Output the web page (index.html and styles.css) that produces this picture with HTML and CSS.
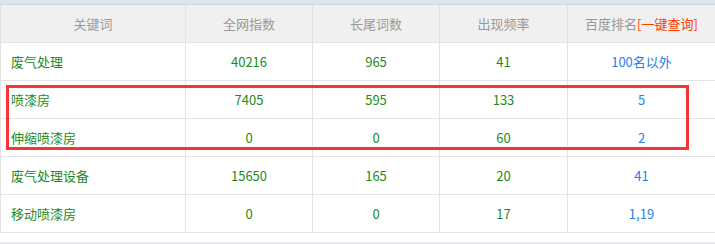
FILE: index.html
```html
<!DOCTYPE html>
<html lang="zh-CN">
<head>
<meta charset="utf-8">
<link rel="stylesheet" href="styles.css">
</head>
<body>
<div class="page">
  <div class="topbar"></div>
  <div class="grid">
    <div class="cell head">关键词</div>
    <div class="cell head">全网指数</div>
    <div class="cell head">长尾词数</div>
    <div class="cell head">出现频率</div>
    <div class="cell head">百度排名<a class="query">[一键查询]</a></div>

    <div class="cell kw">废气处理</div>
    <div class="cell num">40216</div>
    <div class="cell num">965</div>
    <div class="cell num">41</div>
    <div class="cell rank">100名以外</div>

    <div class="cell kw">喷漆房</div>
    <div class="cell num">7405</div>
    <div class="cell num">595</div>
    <div class="cell num">133</div>
    <div class="cell rank">5</div>

    <div class="cell kw">伸缩喷漆房</div>
    <div class="cell num">0</div>
    <div class="cell num">0</div>
    <div class="cell num">60</div>
    <div class="cell rank">2</div>

    <div class="cell kw">废气处理设备</div>
    <div class="cell num">15650</div>
    <div class="cell num">165</div>
    <div class="cell num">20</div>
    <div class="cell rank">41</div>

    <div class="cell kw">移动喷漆房</div>
    <div class="cell num">0</div>
    <div class="cell num">0</div>
    <div class="cell num">17</div>
    <div class="cell rank">1,19</div>
  </div>
  <div class="footer"></div>
  <div class="highlight"></div>
</div>
</body>
</html>
```
FILE: styles.css
```css
html, body {
  margin: 0;
  padding: 0;
  background: #ffffff;
}
.page {
  position: relative;
  width: 715px;
  height: 244px;
  overflow: hidden;
  font-family: "Noto Sans CJK SC", "Noto Sans", sans-serif;
  font-size: 13px;
}
.topbar {
  height: 4px;
  background: #dfe3ee;
  border-bottom: 1px solid #cfd5e3;
}
.grid {
  display: grid;
  grid-template-columns: 185px 127px 127px 128px 148px;
  grid-auto-rows: 38px;
  border-left: 1px solid #e3e3e3;
}
.cell {
  display: flex;
  align-items: center;
  justify-content: center;
  border-right: 1px solid #e3e3e3;
  border-bottom: 1px solid #e3e3e3;
  white-space: nowrap;
  line-height: 1;
}
.head {
  background: #f0f0f0;
  color: #999999;
}
.query {
  color: #ff3c00;
}
.kw {
  justify-content: flex-start;
  padding-left: 10px;
  color: #1c8a1c;
}
.num {
  color: #1c8a1c;
}
.rank {
  color: #2680e6;
}
.footer {
  margin-top: 9px;
  height: 2px;
  background: #e6e8ee;
}
.highlight {
  position: absolute;
  left: 6px;
  top: 85px;
  width: 677px;
  height: 59px;
  border: 3px solid #f53535;
}
```
